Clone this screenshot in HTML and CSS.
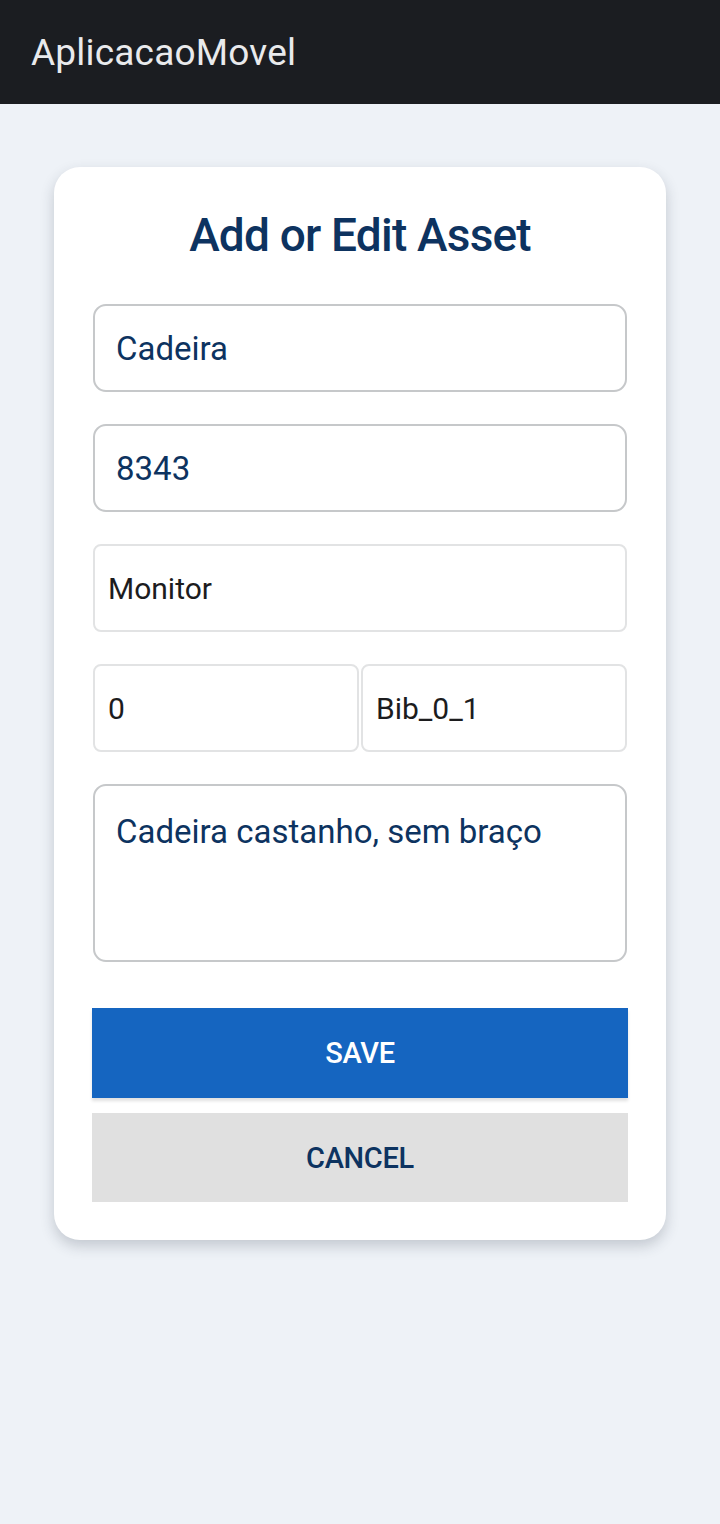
FILE: index.html
```html
<!DOCTYPE html>
<html>
<head>
<meta charset="utf-8">
<link rel="stylesheet" href="styles.css">
</head>
<body>
<header class="appbar"><span class="appbar-title">AplicacaoMovel</span></header>
<main class="page">
  <section class="card">
    <h1 class="card-title">Add or Edit Asset</h1>
    <div class="field field-strong"><span class="val">Cadeira</span></div>
    <div class="field field-strong"><span class="val">8343</span></div>
    <div class="field field-light"><span class="val">Monitor</span></div>
    <div class="row">
      <div class="field field-light"><span class="val">0</span></div>
      <div class="field field-light"><span class="val">Bib_0_1</span></div>
    </div>
    <div class="field field-strong field-area"><span class="val">Cadeira castanho, sem braço</span></div>
    <div class="actions">
      <button class="btn btn-save">SAVE</button>
      <button class="btn btn-cancel">CANCEL</button>
    </div>
  </section>
</main>
</body>
</html>
```
FILE: styles.css
```css
* { box-sizing: border-box; }
html, body { margin: 0; padding: 0; }
body {
  background: #eef2f7;
  font-family: Roboto, "Noto Sans", sans-serif;
  width: 720px;
  min-height: 1524px;
}
.appbar {
  height: 104px;
  background: #1b1d21;
  display: flex;
  align-items: center;
  padding-left: 31px;
}
.appbar-title {
  color: #e9eaec;
  font-size: 37px;
  font-weight: 400;
  letter-spacing: 0.2px;
}
.page {
  padding: 63px 54px 0;
}
.card {
  background: #fff;
  border-radius: 26px;
  box-shadow: 0 6px 14px rgba(40, 50, 70, 0.22);
  padding: 36px 39px 38px 39px;
  display: flex;
  flex-direction: column;
}
.card-title {
  margin: 0 0 37px;
  text-align: center;
  color: #0d3360;
  font-size: 46px;
  font-weight: 500;
  letter-spacing: -0.8px;
  line-height: 64px;
}
.field {
  height: 88px;
  background: #fff;
  display: flex;
  align-items: center;
  margin-bottom: 32px;
}
.field-strong {
  border: 2px solid #c6c8ca;
  border-radius: 13px;
  padding-left: 21px;
  color: #0d3360;
  font-size: 33px;
}
.field-light {
  border: 2px solid #e2e3e4;
  border-radius: 8px;
  padding-left: 13px;
  color: #1c1c1e;
  font-size: 30px;
}
.row {
  display: flex;
  gap: 2px;
}
.row .field { flex: 1; }
.field-area {
  height: 178px;
  align-items: flex-start;
  padding-top: 26px;
  margin-bottom: 46px;
}
.actions {
  display: flex;
  flex-direction: column;
  gap: 15px;
}
.btn {
  border: none;
  height: 90px;
  font-family: inherit;
  font-size: 29px;
  font-weight: 500;
  letter-spacing: -0.3px;
  margin: 0 -1px;
}
.btn-save {
  background: #1565c0;
  color: #fff;
  box-shadow: 0 3px 3px rgba(0,0,0,0.12);
}
.btn-cancel {
  background: #e0e0e0;
  color: #0d3360;
  height: 89px;
}
```
